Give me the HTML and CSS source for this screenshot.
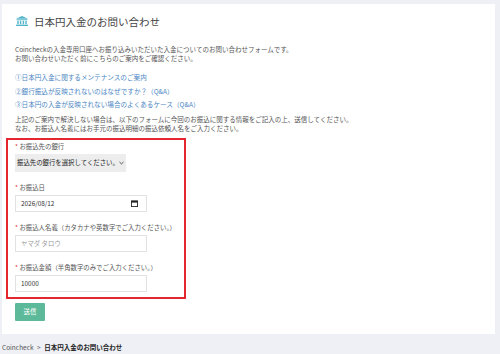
FILE: index.html
```html
<!DOCTYPE html>
<html lang="ja">
<head>
<meta charset="utf-8">
<link rel="stylesheet" href="styles.css">
</head>
<body>
<main class="card">
  <h1 class="title">
    <svg class="bank" viewBox="0 0 12 10" width="12" height="10">
      <path d="M6 0 L12 2.8 L0 2.8 Z" fill="#52b4c8"/>
      <rect x="0.5" y="3.3" width="11" height="0.9" fill="#52b4c8"/>
      <rect x="1.3" y="4.7" width="1.4" height="3.6" fill="#52b4c8"/>
      <rect x="3.9" y="4.7" width="1.4" height="3.6" fill="#52b4c8"/>
      <rect x="6.7" y="4.7" width="1.4" height="3.6" fill="#52b4c8"/>
      <rect x="9.3" y="4.7" width="1.4" height="3.6" fill="#52b4c8"/>
      <rect x="0" y="8.7" width="12" height="1.3" fill="#52b4c8"/>
    </svg>
    <span>日本円入金のお問い合わせ</span>
  </h1>
  <p class="text intro">Coincheckの入金専用口座へお振り込みいただいた入金についてのお問い合わせフォームです。<br>お問い合わせいただく前にこちらのご案内をご確認ください。</p>
  <ul class="links">
    <li><a>①日本円入金に関するメンテナンスのご案内</a></li>
    <li><a>②銀行振込が反映されないのはなぜですか？（Q&amp;A）</a></li>
    <li><a>③日本円の入金が反映されない場合のよくあるケース（Q&amp;A）</a></li>
  </ul>
  <p class="text note">上記のご案内で解決しない場合は、以下のフォームに今回のお振込に関する情報をご記入の上、送信してください。<br>なお、お振込人名義にはお手元の振込明細の振込依頼人名をご入力ください。</p>
  <form class="form">
    <div class="field">
      <div class="label"><span class="req">*</span> お振込先の銀行</div>
      <div class="select"><span class="sel-text">振込先の銀行を選択してください。</span>
        <svg class="chev" viewBox="0 0 6 4" width="5" height="4"><path d="M0.6 0.8 L3 3.1 L5.4 0.8" fill="none" stroke="#333" stroke-width="1"/></svg>
      </div>
    </div>
    <div class="field">
      <div class="label"><span class="req">*</span> お振込日</div>
      <div class="input date"><span>2026/08/12</span>
        <svg class="cal" viewBox="0 0 8 8" width="7" height="7"><rect x="0.5" y="1" width="7" height="6.5" fill="none" stroke="#222" stroke-width="1"/><rect x="0.5" y="1" width="7" height="2" fill="#222"/></svg>
      </div>
    </div>
    <div class="field">
      <div class="label"><span class="req">*</span> お振込人名義（カタカナや英数字でご入力ください。）</div>
      <div class="input placeholder">ヤマダ タロウ</div>
    </div>
    <div class="field last">
      <div class="label"><span class="req">*</span> お振込金額（半角数字のみでご入力ください。）</div>
      <div class="input">10000</div>
    </div>
  </form>
  <button class="submit" type="button">送信</button>
</main>
<nav class="crumbs">Coincheck <span class="sep">&gt;</span> <strong>日本円入金のお問い合わせ</strong></nav>
</body>
</html>
```
FILE: styles.css
```css
* { box-sizing: border-box; }
html, body { margin: 0; padding: 0; }
body {
  background: #eef0f5;
  font-family: "Noto Sans CJK JP", "Noto Sans", sans-serif;
  color: #555;
  width: 500px;
  height: 354px;
  overflow: hidden;
}
.card {
  background: #fff;
  margin: 4px 0 0 2px;
  width: 493px;
  padding: 8px 13px 13px 13px;
}
.title {
  display: flex;
  align-items: center;
  gap: 6px;
  margin: 0;
  height: 18px;
  font-size: 10.5px;
  font-weight: 400;
  color: #444;
  padding-left: 1px;
}
.bank { display: block; }
.text {
  margin: 0;
  font-size: 6.5px;
  line-height: 9px;
  color: #555;
  white-space: nowrap;
}
.intro { margin-top: 15px; }
.links {
  list-style: none;
  margin: 8px 0 0 0;
  padding: 0;
  font-size: 6.6px;
  line-height: 13.5px;
}
.links li { height: 13.5px; }
.links a { color: #4b86c2; }
.note { margin-top: 3px; }
.form {
  margin: 5px 0 0 -9px;
  width: 180px;
  border: 2px solid #e4262f;
  padding: 2px 7px 5px 7px;
}
.field { margin-bottom: 11px; }
.field.last { margin-bottom: 0; }
.label {
  font-size: 6.4px;
  line-height: 9px;
  height: 9px;
  color: #555;
  margin-bottom: 3px;
  white-space: nowrap;
}
.req { color: #e03030; }
.select {
  display: flex;
  align-items: center;
  justify-content: space-between;
  width: 111px;
  height: 18px;
  background: #ededed;
  padding: 0 3px 0 2px;
  font-size: 6.4px;
  color: #222;
  white-space: nowrap;
  overflow: hidden;
}
.sel-text { flex: 0 1 auto; }
.chev { flex: 0 0 auto; display: block; }
.input {
  display: flex;
  align-items: center;
  justify-content: space-between;
  width: 132px;
  height: 17px;
  border: 1px solid #e2e2e2;
  background: #fff;
  padding: 0 8px 0 5px;
  font-size: 6.4px;
  color: #333;
}
.placeholder { color: #9a9a9a; }
.submit {
  display: block;
  margin-top: 4px;
  width: 30px;
  height: 18px;
  border: none;
  border-radius: 1px;
  background: #5cba9a;
  color: #fff;
  font-family: inherit;
  font-size: 6.4px;
  padding: 0;
}
.crumbs {
  margin: 8px 0 0 2px;
  font-size: 6.5px;
  line-height: 10px;
  color: #555;
}
.crumbs .sep { margin: 0 2px; }
.crumbs strong { color: #222; font-weight: 700; }
```
